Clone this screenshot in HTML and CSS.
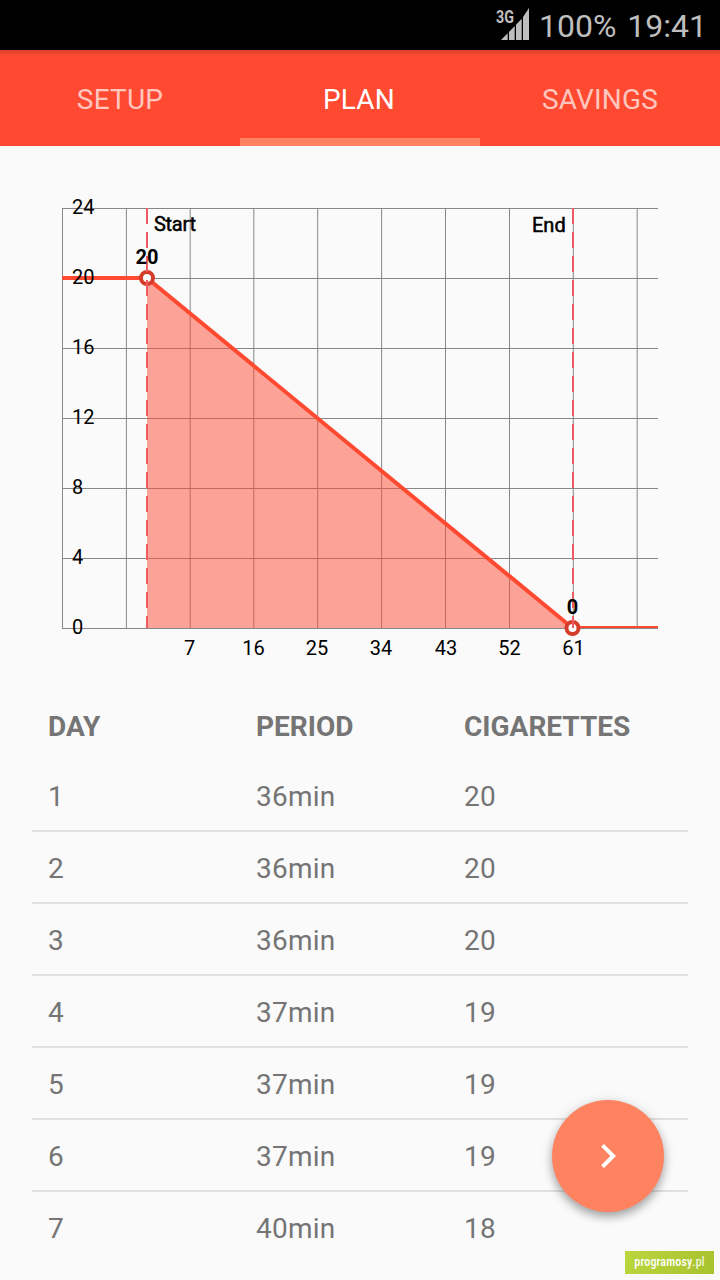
FILE: index.html
```html
<!DOCTYPE html>
<html lang="en">
<head>
    <meta charset="UTF-8">
    <meta name="viewport" content="width=device-width, initial-scale=1.0">
    <title>Plan</title>
    <link rel="stylesheet" href="styles.css">
</head>
<body>
    <div class="status-bar">
        <svg class="signal" width="34" height="34" viewBox="0 0 34 34">
            <text x="0" y="15" textLength="18" lengthAdjust="spacingAndGlyphs">3G</text>
            <path d="M5 32 L11.7 25.2 V32 Z M13 23.9 L18.7 18 V32 H13 Z M20 16.7 L25.7 10.8 V32 H20 Z M27 9 L33 0 V32 H27 Z"/>
        </svg>
        <span class="battery">100%</span>
        <span class="clock">19:41</span>
    </div>

    <nav class="tabs">
        <a class="tab">SETUP</a>
        <a class="tab active">PLAN</a>
        <a class="tab">SAVINGS</a>
    </nav>

    <main>
        <svg class="chart" width="720" height="546" viewBox="0 146 720 546">
            <!-- grid -->
            <path class="grid" d="M62 208.5H658 M62 278.5H658 M62 348.5H658 M62 418.5H658 M62 488.5H658 M62 558.5H658 M62 628.5H658"/>
            <path class="grid" d="M62.5 208V629 M126.4 208V629 M190.2 208V629 M253.8 208V629 M317.7 208V629 M381.6 208V629 M445.5 208V629 M509.5 208V629 M573.3 208V629 M637.2 208V629"/>

            <!-- data -->
            <path class="area" d="M147 278 L572.5 628 H147 Z"/>
            <path class="line" d="M62 278 H147 L572.5 628"/>
            <path class="line thin" d="M572.5 627 H658"/>
            <circle class="point" cx="147" cy="278" r="6"/>
            <circle class="point" cx="572.5" cy="628" r="6"/>
            <path class="marker" d="M147 208V628 M573 208V628"/>

            <g class="labels">
                <text x="72" y="214">24</text>
                <text x="72" y="284">20</text>
                <text x="72" y="354">16</text>
                <text x="72" y="424">12</text>
                <text x="72" y="494">8</text>
                <text x="72" y="564">4</text>
                <text x="72" y="634">0</text>
            </g>
            <g class="labels center">
                <text x="189.5" y="655">7</text>
                <text x="253.5" y="655">16</text>
                <text x="317" y="655">25</text>
                <text x="381" y="655">34</text>
                <text x="446" y="655">43</text>
                <text x="509.5" y="655">52</text>
                <text x="573.5" y="655">61</text>
            </g>
            <g class="labels center bold">
                <text x="147" y="264">20</text>
                <text x="572.5" y="614">0</text>
            </g>
            <g class="labels heavy">
                <text x="154" y="231" textLength="42">Start</text>
                <text x="532" y="232">End</text>
            </g>
        </svg>

        <div class="plan">
            <div class="row head"><span>DAY</span><span>PERIOD</span><span>CIGARETTES</span></div>
            <div class="row"><span>1</span><span>36min</span><span>20</span></div>
            <div class="row"><span>2</span><span>36min</span><span>20</span></div>
            <div class="row"><span>3</span><span>36min</span><span>20</span></div>
            <div class="row"><span>4</span><span>37min</span><span>19</span></div>
            <div class="row"><span>5</span><span>37min</span><span>19</span></div>
            <div class="row"><span>6</span><span>37min</span><span>19</span></div>
            <div class="row"><span>7</span><span>40min</span><span>18</span></div>
        </div>
    </main>

    <button class="fab" aria-label="Next">
        <svg width="48" height="48" viewBox="0 0 24 24"><path d="M10 6 8.590 7.410 13.170 12l-4.580 4.590L10 18l6-6z"/></svg>
    </button>
    <div class="badge">programosy<span>.pl</span></div>
</body>
</html>
```

FILE: styles.css
```css
* {
    box-sizing: border-box;
}
body {
    margin: 0;
    height: 1280px;
    position: relative;
    overflow: hidden;
    font-family: Roboto, sans-serif;
    background-color: #fafafa;
}
.status-bar {
    display: flex;
    align-items: center;
    justify-content: flex-end;
    height: 50px;
    padding-right: 14px;
    background-color: #000;
    color: #bebebe;
    font-size: 32px;
    line-height: 50px;
}
.status-bar span {
    padding-top: 1px;
}
.signal {
    margin-right: 9px;
    fill: #bebebe;
    overflow: visible;
}
.signal text {
    font-size: 18px;
    font-weight: 700;
}
.battery {
    margin-right: 11px;
}
.clock {
    margin-right: -1px;
}
.tabs {
    display: flex;
    height: 96px;
    background: linear-gradient(rgba(0,0,0,0.15), transparent 6px) #ff4a31;
}
.tab {
    flex: 1;
    padding-top: 4px;
    border-bottom: 8px solid transparent;
    text-align: center;
    font-size: 28px;
    line-height: 92px;
    letter-spacing: 0.2px;
    color: rgba(255,255,255,0.7);
}
.tab.active {
    color: #fff;
    border-bottom-color: #ff8360;
    text-indent: -2px;
}
.chart {
    display: block;
}
.grid {
    fill: none;
    stroke: #888;
    stroke-width: 1;
}
.area {
    fill: #ff4a31;
    fill-opacity: 0.5;
}
.line {
    fill: none;
    stroke: #ff4a31;
    stroke-width: 4;
}
.line.thin {
    stroke-width: 2;
}
.point {
    fill: #fff;
    stroke: #d53d2a;
    stroke-width: 4;
}
.marker {
    fill: none;
    stroke: #ee5b61;
    stroke-width: 2;
    stroke-dasharray: 16 8;
}
.labels {
    font-size: 20px;
    fill: #000;
}
.center {
    text-anchor: middle;
}
.bold {
    font-weight: 700;
}
.heavy {
    stroke: #000;
    stroke-width: 0.5;
}
.plan {
    margin: 0 32px;
}
.row {
    display: grid;
    grid-template-columns: 208px 208px 1fr;
    align-items: center;
    height: 72px;
    padding-top: 2px;
    padding-left: 16px;
    border-bottom: 2px solid #e0e0e0;
    font-size: 28px;
    letter-spacing: 0.25px;
    color: #757575;
}
.row.head {
    height: 68px;
    padding-top: 0;
    border-bottom: none;
    font-weight: 700;
    letter-spacing: 0;
}
.row:last-child {
    border-bottom-color: transparent;
}
.fab {
    position: absolute;
    left: 552px;
    top: 1100px;
    width: 112px;
    height: 112px;
    padding: 0;
    display: flex;
    align-items: center;
    justify-content: center;
    border: none;
    border-radius: 50%;
    background-color: #ff8360;
    box-shadow: 0 5px 9px rgba(0,0,0,0.28), 0 2px 14px rgba(0,0,0,0.12);
}
.fab svg {
    fill: #fff;
}
.badge {
    position: absolute;
    left: 625px;
    top: 1251px;
    width: 89px;
    height: 23px;
    background: linear-gradient(100deg, #bbd53d, #a8c32f);
    color: #fff;
    font-family: "Roboto Condensed", Roboto, sans-serif;
    font-size: 12px;
    font-weight: 500;
    letter-spacing: 0.15px;
    line-height: 22px;
    text-align: center;
}
.badge span {
    font-weight: 400;
}
```
